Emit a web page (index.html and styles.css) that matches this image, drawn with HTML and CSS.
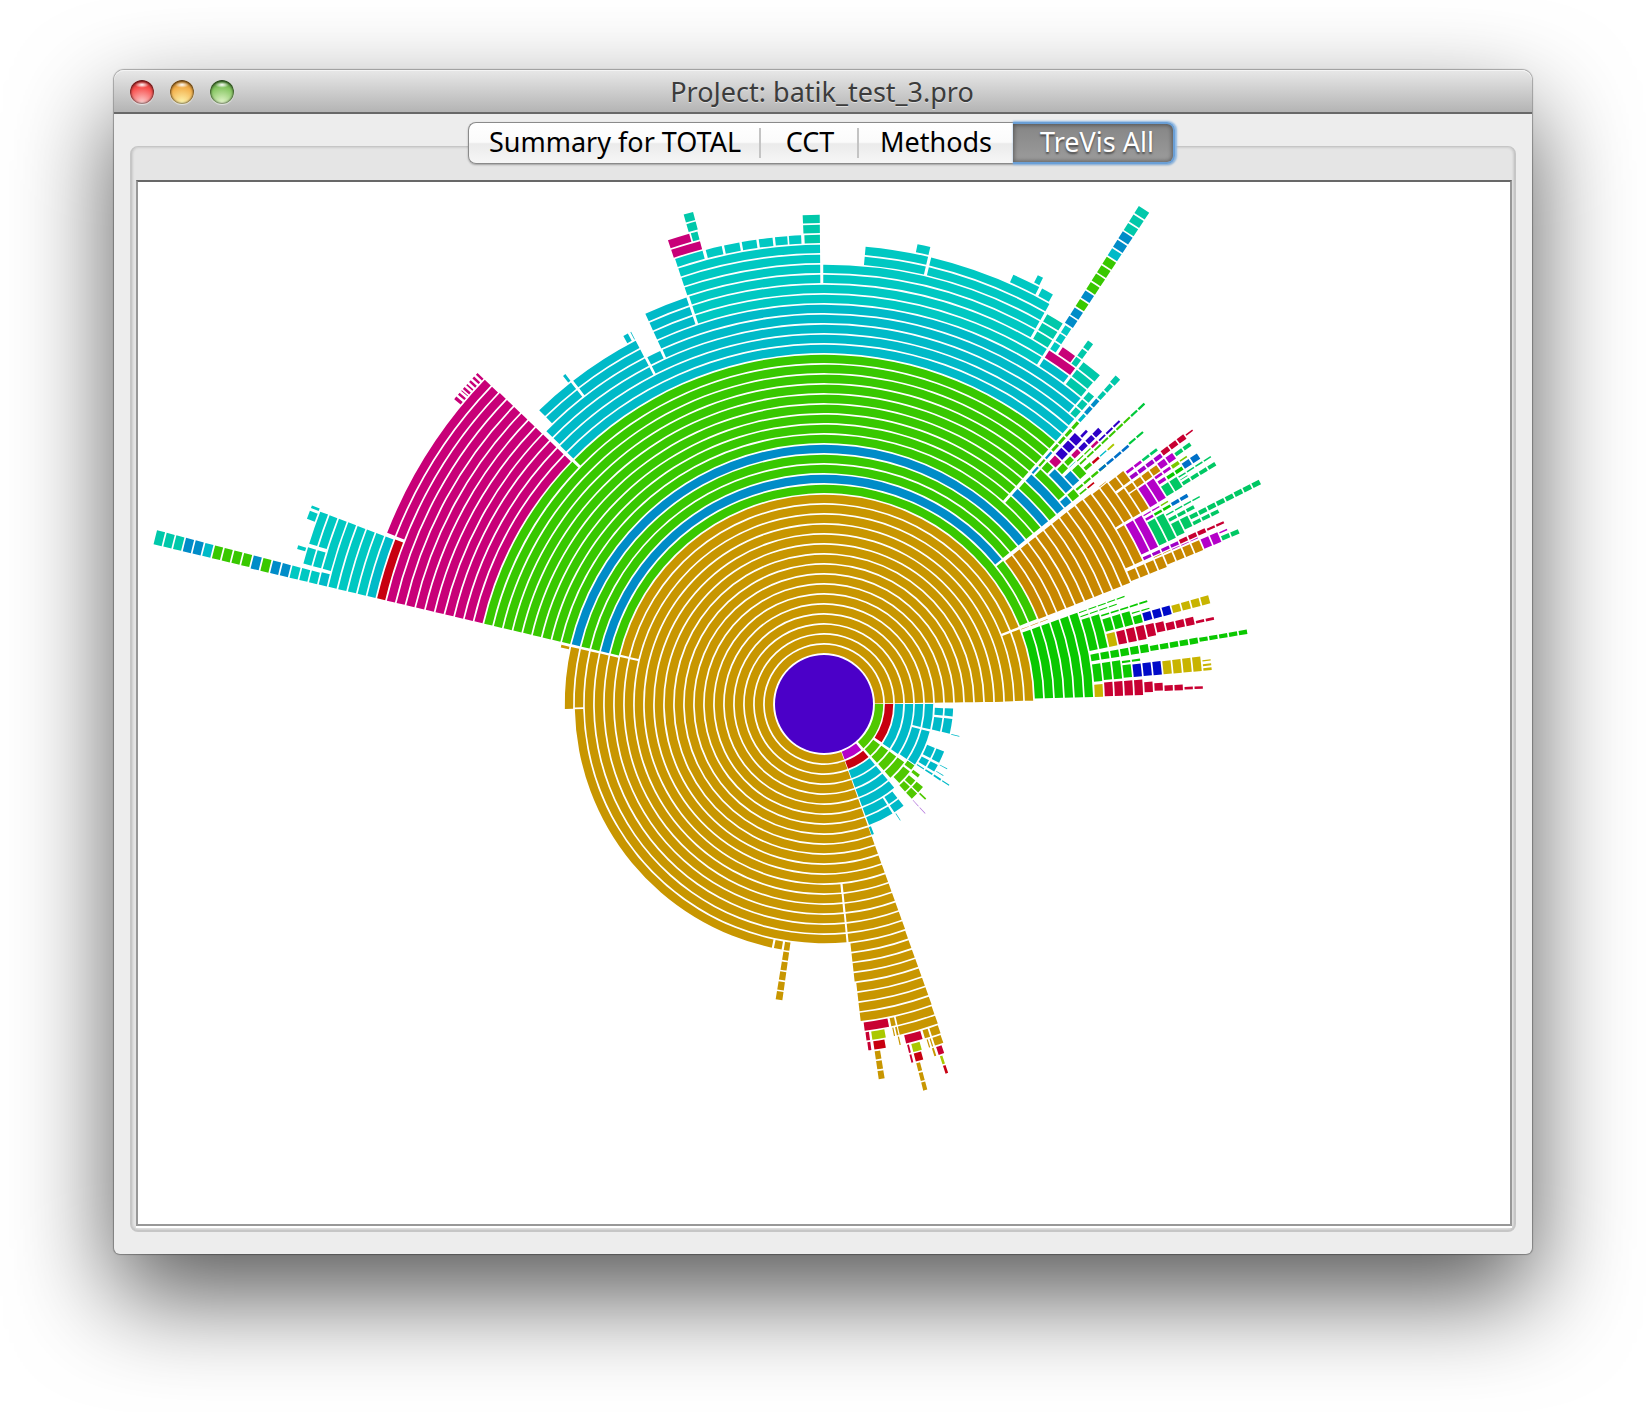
FILE: index.html
```html
<!DOCTYPE html>
<html lang="en">
<head>
  <meta charset="UTF-8">
  <title>ProJect: batik_test_3.pro</title>
  <link rel="stylesheet" href="styles.css">
</head>
<body>
  <div class="window">
    <header class="titlebar">
      <div class="lights">
        <button class="light red" aria-label="Close"></button>
        <button class="light yellow" aria-label="Minimize"></button>
        <button class="light green" aria-label="Zoom"></button>
      </div>
      <h1 class="title">ProJect: batik_test_3.pro</h1>
    </header>
    <main class="content">
      <div class="tabs" role="tablist">
        <button class="tab tab-summary" role="tab">Summary for TOTAL</button>
        <button class="tab tab-cct" role="tab">CCT</button>
        <button class="tab tab-methods" role="tab">Methods</button>
        <button class="tab tab-trevis selected" role="tab" aria-selected="true">TreVis All</button>
      </div>
      <section class="pane">
        <div class="canvas">
          <svg id="trevis" viewBox="-686 -522 1372 1042" role="img" aria-label="Calling context ring chart"></svg>
        </div>
      </section>
    </main>
  </div>
  <script src="trevis.js"></script>
</body>
</html>
```

FILE: styles.css
```css
* { box-sizing: border-box; }

body {
  margin: 0;
  min-height: 100vh;
  padding: 70px 114px 159px;
  display: flex;
  background: #fff;
  font-family: "Noto Sans", "Open Sans", sans-serif;
  font-size: 27px;
}

button { font: inherit; border: 0; padding: 0; margin: 0; }

.window {
  flex: 1;
  display: flex;
  flex-direction: column;
  background: #ededed;
  border-radius: 10px 10px 6px 6px;
  box-shadow: 0 0 1px 1px rgba(0, 0, 0, .3), 0 42px 100px rgba(0, 0, 0, .66);
}

/* title bar */
.titlebar {
  display: grid;
  grid-template-columns: 1fr auto 1fr;
  align-items: center;
  height: 44px;
  padding: 2px 18px 0 16px;
  border-bottom: 2px solid #686868;
  border-radius: 10px 10px 0 0;
  background: linear-gradient(#e8e8e8, #b4b4b4);
  box-shadow: inset 0 1px 0 #f4f4f4;
}
.title { grid-column: 2; margin: 0; font-size: 27px; line-height: 36px; font-weight: 400; color: #3c3c3c; text-shadow: 0 1px 0 rgba(255, 255, 255, .5); }
.lights { display: flex; gap: 16px; }
.light { width: 24px; height: 24px; border-radius: 50%; box-shadow: 0 1px 1px rgba(255, 255, 255, .6), inset 0 0 2px 1px rgba(0, 0, 0, .5), inset 0 2px 3px rgba(0, 0, 0, .3); }
.red { background: radial-gradient(ellipse 7px 3px at 50% 20%, #fff, transparent), radial-gradient(circle at 50% 95%, #fcd0d0, #f8514f 60%, #c02020); }
.yellow { background: radial-gradient(ellipse 7px 3px at 50% 20%, #fff, transparent), radial-gradient(circle at 50% 95%, #fdf6b0, #f3b04c 60%, #b87018); }
.green { background: radial-gradient(ellipse 7px 3px at 50% 20%, #fff, transparent), radial-gradient(circle at 50% 95%, #e4f6cc, #86c662 60%, #3c7c28); }

/* tabs */
.content {
  flex: 1;
  display: flex;
  flex-direction: column;
  padding: 8px 16px 22px;
}
.tabs { position: relative; display: flex; align-self: center; margin: 0 3px -18px 0; border-radius: 8px; box-shadow: 0 1px 2px rgba(0, 0, 0, .3); }
.tab {
  position: relative;
  height: 42px;
  line-height: 36px;
  padding-bottom: 2px;
  color: #000;
  background: linear-gradient(#fff 0, #fbfbfb 48%, #ebebeb 52%, #f6f6f6);
  border: 1px solid #8a8a8a;
  border-width: 1px 0;
}
.tab-summary { width: 293px; border-left-width: 1px; border-radius: 8px 0 0 8px; }
.tab-cct { width: 98px; }
.tab-methods { width: 154px; }
.tab-trevis { width: 162px; padding-left: 8px; }
.tab-summary::after, .tab-cct::after {
  content: "";
  position: absolute;
  right: 0;
  top: 5px;
  width: 2px;
  height: 30px;
  background: #c4c4c4;
}
.tab.selected {
  color: #fff;
  text-shadow: 0 2px 2px rgba(0, 0, 0, .5);
  background: linear-gradient(#858585, #9c9c9c);
  border: 2px solid #6a9fd6;
  border-left: 0;
  border-radius: 0 8px 8px 0;
  box-shadow: 1px 0 2px 1px #8db8e4, inset 0 0 4px 1px rgba(0, 0, 0, .4);
}

/* pane with the chart */
.pane {
  flex: 1;
  display: flex;
  padding: 33px 2px 4px 4px;
  border: 2px solid #c6c6c6;
  border-top-width: 1px;
  border-radius: 8px;
  background: #e5e5e5;
  box-shadow: inset 0 0 3px rgba(0, 0, 0, .2);
}
.canvas {
  flex: 1;
  background: #fff;
  border: 2px solid #989898;
  border-top-color: #686868;
  box-shadow: 0 2px 0 #fff;
}
.canvas svg { display: block; width: 100%; height: 100%; }
```

FILE: trevis.js
```js
var GOLD = '#c89600', ORANGE = '#c88800', GREEN = '#38c800', BLUE = '#008cc8';
var CYAN = '#00bac8', AQUA = '#00c8c2', TEAL = '#00c8aa', PINK = '#c80078';
var RED = '#c80010', CRIMSON = '#c80032', PURPLE = '#b400c8', VIOLET = '#a000c8';
var JADE = '#00c864', LEAF = '#0ac800', NAVY = '#000ac8', YELLOW = '#c8b400';
var LIME = '#aac800', INDIGO = '#2d00c8', AZURE = '#0070c8', MOSS = '#50c800';

// [colour, inner radius, outer radius, from angle, to angle]
// every 10 units of radius is one call depth, angles are counterclockwise
var calls = [
  // main branch
  [GOLD, 50, 180, .7, 289.8],
  [GOLD, 180, 190, .8, 275.2], [GOLD, 180, 190, 275.9, 289.8],
  [GOLD, 190, 210, .9, 20.9], [GOLD, 190, 210, 21.6, 166.4], [GOLD, 190, 210, 167, 275.3],
  [GOLD, 190, 240, 275.9, 289.8], [GOLD, 210, 240, 167.3, 275.4],
  [GOLD, 240, 250, 167.3, 180.8], [GOLD, 250, 260, 167.3, 181.1], [GOLD, 260, 270, 167.3, 167.9],
  [GOLD, 240, 250, 181.2, 257.9], [GOLD, 240, 250, 258.4, 260.2], [GOLD, 240, 300, 260.7, 262],
  [GOLD, 240, 280, 276.3, 289.7], [GOLD, 280, 320, 276.6, 289.7],

  // bottom tips
  [CRIMSON, 320, 330, 277.1, 281.4], [GOLD, 320, 330, 281.8, 282.6], [GOLD, 320, 340, 282.9, 289.6],
  [CRIMSON, 330, 340, 277.2, 277.8], [LIME, 330, 340, 278.2, 280.5], [GOLD, 330, 340, 281.9, 282.1], [GOLD, 330, 340, 282.4, 282.7],
  [CRIMSON, 340, 350, 277.3, 277.8], [RED, 340, 350, 278.3, 280.2], [GOLD, 340, 350, 282.5, 282.7],
  [GOLD, 350, 380, 278.3, 279.2],
  [CRIMSON, 340, 350, 283.6, 286.4], [GOLD, 340, 350, 286.8, 287.7], [GOLD, 340, 350, 288, 289.5],
  [CRIMSON, 350, 360, 283.7, 284], [LIME, 350, 360, 284.4, 285.8], [GOLD, 350, 360, 287, 287.2], [GOLD, 350, 360, 287.5, 287.7], [GOLD, 350, 360, 288, 289.4],
  [CRIMSON, 360, 370, 283.7, 284], [RED, 360, 370, 284.4, 285.6], [GOLD, 360, 370, 287.4, 287.7], [CRIMSON, 360, 370, 288.1, 289],
  [GOLD, 370, 400, 284.4, 285], [LIME, 370, 380, 288.2, 288.6], [RED, 380, 390, 288.2, 288.6],

  // big fan
  [GREEN, 210, 220, 21.8, 166.7],
  [GREEN, 220, 230, 21.8, 38.6], [BLUE, 220, 230, 39.2, 166.7],
  [GREEN, 230, 250, 39.2, 166.7], [BLUE, 250, 260, 39.2, 166.7],
  [GREEN, 260, 270, 39.2, 166.7], [GREEN, 270, 340, 48.6, 166.7],
  [GREEN, 340, 350, 48.6, 135.6], [GREEN, 340, 350, 136.1, 166.7],
  [PINK, 350, 450, 136.2, 166.7], [PINK, 450, 470, 136.3, 158.6],
  [PINK, 470, 480, 136.3, 136.6], [PINK, 470, 480, 136.9, 137.2], [PINK, 470, 480, 137.5, 137.8],
  [PINK, 470, 480, 138.1, 138.3], [PINK, 470, 480, 138.6, 138.9], [PINK, 470, 480, 139.1, 139.2],
  [PINK, 470, 480, 139.5, 139.8], [PINK, 470, 480, 140.1, 140.5],

  // left tail
  [RED, 450, 460, 159, 166.7], [CYAN, 460, 470, 159.1, 166.7], [AQUA, 470, 510, 159.1, 166.7],
  [AQUA, 510, 520, 159.1, 164.9], [CYAN, 510, 520, 165.3, 166.7],
  [AQUA, 520, 540, 159.1, 162.7], [AQUA, 520, 540, 163.1, 164.9],
  [AQUA, 540, 550, 158.8, 159.1], [AQUA, 540, 550, 159.4, 160.3], [AQUA, 540, 550, 163.2, 163.6],
  [AQUA, 520, 550, 165.4, 166.7], [BLUE, 550, 570, 165.4, 166.7], [GREEN, 570, 580, 165.4, 166.7],
  [BLUE, 580, 590, 165.4, 166.7], [GREEN, 590, 630, 165.4, 166.6], [CYAN, 630, 640, 165.4, 166.6],
  [BLUE, 640, 660, 165.4, 166.6], [TEAL, 660, 690, 165.4, 166.6],

  // top
  [CYAN, 350, 370, 48.6, 135.6],
  [CYAN, 370, 380, 48.7, 117], [CYAN, 370, 390, 117.4, 135.5],
  [TEAL, 380, 400, 48.7, 49.7], [CYAN, 380, 390, 50, 114.5], [CYAN, 380, 390, 114.9, 117],
  [CYAN, 390, 400, 50, 114.6],
  [CYAN, 390, 410, 117.4, 127.8], [CYAN, 390, 410, 128.2, 134.1],
  [CYAN, 410, 420, 128.1, 128.5], [CYAN, 410, 420, 117.4, 117.5], [CYAN, 410, 420, 117.9, 118.6],
  [CYAN, 400, 430, 108.7, 114.6],
  [TEAL, 400, 410, 48.7, 49.7], [TEAL, 400, 420, 50.1, 52.9], [TEAL, 420, 430, 50, 52.8],
  [CYAN, 400, 410, 53.3, 57.5], [AQUA, 400, 420, 57.9, 108.3],
  [PINK, 410, 420, 53.2, 57.5], [PINK, 420, 430, 54.2, 56.2],
  [AQUA, 420, 450, 56.6, 57.5], [TEAL, 420, 450, 53.2, 54],
  [BLUE, 450, 470, 56.5, 57.7], [GREEN, 470, 480, 56.5, 57.7], [BLUE, 480, 490, 56.5, 57.7],
  [GREEN, 490, 530, 56.5, 57.7], [CYAN, 530, 540, 56.5, 57.7], [BLUE, 540, 560, 56.5, 57.7], [TEAL, 560, 590, 56.5, 57.7],
  [TEAL, 420, 450, 57.9, 60.2], [AQUA, 420, 440, 60.6, 90.1], [AQUA, 420, 430, 90.5, 108.3],
  [AQUA, 440, 460, 60.6, 76.5], [AQUA, 440, 460, 76.9, 84.8],
  [AQUA, 460, 470, 60.8, 62.3], [AQUA, 460, 470, 62.7, 66.2], [AQUA, 470, 480, 62.8, 63.5], [AQUA, 460, 470, 76.9, 78.5],
  [AQUA, 430, 460, 90.5, 108.5],
  [AQUA, 460, 470, 92.8, 94.3], [AQUA, 460, 470, 94.5, 96], [AQUA, 460, 470, 96.3, 98], [AQUA, 460, 470, 98.3, 100.1],
  [AQUA, 460, 470, 100.4, 102.3], [AQUA, 460, 470, 102.6, 104.6], [AQUA, 460, 470, 105, 108.5],
  [TEAL, 460, 470, 90.5, 92.4], [TEAL, 470, 490, 90.5, 92.5],
  [PINK, 470, 480, 105, 108.6], [PINK, 480, 490, 106, 108.6], [TEAL, 480, 490, 105, 105.8], [TEAL, 490, 510, 104.9, 106],

  // blue and green twigs, north east
  [BLUE, 310, 320, 47.7, 48.1], [GREEN, 320, 330, 47.7, 48.1], [BLUE, 330, 340, 47.7, 48.1], [GREEN, 340, 380, 47.7, 48.2],
  [CYAN, 380, 390, 47.7, 48.2], [BLUE, 390, 410, 47.7, 48.3], [TEAL, 410, 430, 47.7, 48.3], [TEAL, 430, 440, 47.6, 48.4],
  [GREEN, 270, 280, 39.2, 48], [BLUE, 280, 290, 39.2, 48], [GREEN, 290, 300, 39.2, 47.9], [BLUE, 300, 310, 39.2, 47.9],
  [GREEN, 310, 320, 41, 47.3], [BLUE, 310, 320, 39.2, 40.6],
  [GREEN, 320, 330, 45.9, 47.3], [BLUE, 320, 330, 41.1, 45.5], [GREEN, 320, 330, 39.2, 40.7],
  [PINK, 330, 340, 45.6, 47.1], [GREEN, 330, 340, 44, 45.2], [BLUE, 330, 340, 41.2, 43.4], [GREEN, 330, 370, 40.1, 40.5], [GREEN, 330, 340, 39.2, 39.5],
  [INDIGO, 340, 370, 45.7, 47.2], [INDIGO, 370, 380, 45.9, 46.3],
  [GREEN, 340, 350, 44.3, 45.2], [PINK, 350, 360, 44.4, 45.2], [INDIGO, 360, 390, 44.4, 45.2],
  [CYAN, 340, 350, 43.9, 44], [GREEN, 350, 370, 43.7, 43.9], [PINK, 370, 380, 43.6, 44], [INDIGO, 380, 410, 43.6, 43.9],
  [GREEN, 340, 350, 41.3, 43.3], [GREEN, 350, 420, 43, 43.3], ['#00c83c', 420, 440, 43, 43.3],
  [GREEN, 350, 360, 41.7, 42.3], [RED, 360, 370, 41.7, 42.1], [CYAN, 370, 380, 41.8, 42], [LIME, 380, 390, 41.7, 42],
  [RED, 340, 350, 39.2, 39.5], [AZURE, 360, 400, 40.1, 40.5], ['#00c83c', 400, 420, 40.3, 40.6],

  // orange branch
  [ORANGE, 230, 330, 21.6, 38.3], [ORANGE, 330, 340, 24.2, 38.2],
  [ORANGE, 340, 350, 24.2, 30.8], [ORANGE, 340, 360, 31.2, 38],
  [ORANGE, 350, 360, 38.2, 38.3], [ORANGE, 360, 380, 36.1, 37.9],
  [ORANGE, 360, 370, 31.1, 35.7], [ORANGE, 370, 380, 31.1, 34.5], [ORANGE, 370, 410, 34.7, 35.7],
  [PURPLE, 380, 400, 31.1, 34.4], [PURPLE, 380, 400, 37.2, 37.6], [JADE, 400, 420, 37.2, 37.6],
  [VIOLET, 380, 420, 36.1, 36.7], [CRIMSON, 420, 450, 36.2, 36.9], [CRIMSON, 450, 460, 36.5, 36.7],
  [PURPLE, 410, 430, 34.9, 35.8], [JADE, 430, 450, 35.1, 35.6],
  [PURPLE, 400, 420, 34.1, 34.5], ['#78c800', 420, 430, 34, 34.5], ['#78c800', 430, 440, 34.2, 34.4],
  [PURPLE, 400, 410, 33.2, 33.7], [LEAF, 410, 430, 33.1, 33.6], [AZURE, 430, 450, 33.1, 33.9],
  [JADE, 400, 420, 31.2, 32.8], [JADE, 420, 460, 31.3, 31.8], [JADE, 420, 430, 32.1, 32.2], [JADE, 420, 460, 32.5, 32.7],
  [PURPLE, 350, 370, 25.2, 30.7],
  [PURPLE, 370, 390, 30.4, 30.6], ['#78c800', 390, 400, 30.4, 30.6],
  [PURPLE, 370, 380, 29.6, 30], [LEAF, 380, 400, 29.6, 30], [AZURE, 400, 420, 29.6, 30.1],
  [JADE, 370, 390, 25.3, 29.3], [JADE, 390, 430, 28.8, 29], [JADE, 390, 420, 27.8, 28.3],
  [JADE, 390, 400, 25.4, 27.4], [JADE, 400, 410, 25.8, 27.4],
  [JADE, 410, 490, 26.7, 27.3], [JADE, 410, 440, 25.8, 26.3],
  [VIOLET, 350, 390, 24.2, 24.7], [CRIMSON, 390, 420, 24.2, 24.8], [CRIMSON, 420, 440, 24.3, 24.6],
  [ORANGE, 360, 380, 23.9, 24], [PURPLE, 380, 410, 23.9, 24],
  [ORANGE, 330, 370, 21.8, 23.6], [ORANGE, 370, 410, 22.1, 23.6],
  [PURPLE, 410, 430, 22.2, 23.6], [JADE, 430, 450, 22.3, 22.9], [PURPLE, 430, 440, 23.3, 23.5],

  // green branch, east
  [ORANGE, 210, 240, 20.7, 20.8], [LEAF, 210, 270, 1.5, 19.8],
  [LEAF, 270, 320, 19.6, 19.8], [LEAF, 270, 310, 18.7, 18.9],
  [LEAF, 270, 290, 11.3, 18.1], [LEAF, 290, 340, 17.5, 17.8],
  [LEAF, 290, 320, 14.4, 16.9], [LEAF, 320, 330, 14.4, 15.8], [LEAF, 320, 340, 16.3, 16.5],
  [NAVY, 330, 360, 14.5, 15.9], [YELLOW, 360, 400, 14.6, 15.8],
  [YELLOW, 290, 300, 11.3, 13.9], [CRIMSON, 300, 330, 11.4, 13.9], [CRIMSON, 330, 340, 11.7, 13.8],
  [CRIMSON, 340, 350, 12.1, 13.7], [CRIMSON, 350, 380, 12.1, 13.3], [CRIMSON, 380, 400, 12.2, 12.6],
  [LEAF, 270, 330, 9.1, 10.5], [LEAF, 330, 380, 9.2, 10.1], [LEAF, 380, 430, 9.4, 10],
  [LEAF, 270, 280, 4.7, 8.4], [LEAF, 280, 300, 4.9, 8.4], [LEAF, 300, 310, 5, 7.4], [LEAF, 300, 320, 7.8, 8.2],
  [NAVY, 310, 340, 5, 7.3], [YELLOW, 340, 380, 5, 7.2],
  [YELLOW, 380, 390, 5, 5.4], [YELLOW, 380, 390, 5.7, 6], [YELLOW, 380, 390, 6.4, 6.6],
  [YELLOW, 270, 280, 1.5, 4.1], [CRIMSON, 280, 320, 1.6, 4.4], [CRIMSON, 320, 330, 2.1, 3.9], [CRIMSON, 330, 340, 2.3, 3.6],
  [CRIMSON, 340, 360, 2.2, 3.1], [CRIMSON, 360, 380, 2.3, 2.7],

  // small branches, south east
  [MOSS, 50, 60, -48.2, 0], [RED, 60, 70, -33.6, 0], [CYAN, 70, 90, -34, 0],
  [CYAN, 90, 110, -13.4, 0], [CYAN, 90, 110, -33.6, -14.6],
  [CYAN, 110, 130, -5.5, -2], [CYAN, 110, 130, -13.3, -6.7], [CYAN, 130, 140, -13.6, -13.3],
  [CYAN, 110, 130, -27, -21.6], [CYAN, 110, 130, -31.5, -28.2], [CYAN, 130, 140, -27.9, -27.6], [CYAN, 130, 140, -31.1, -30.8],
  [CYAN, 100, 110, -34.8, -34.2], [CYAN, 110, 120, -33.3, -32.8], [CYAN, 120, 140, -33.4, -32.6], [CYAN, 140, 150, -33.2, -32.8],
  [MOSS, 60, 100, -48, -36], [MOSS, 100, 110, -46.4, -38.2], [MOSS, 100, 110, -37, -34.2],
  [MOSS, 110, 130, -47.2, -43.9], [MOSS, 110, 130, -43.2, -40], [MOSS, 110, 120, -38, -36.4], [MOSS, 130, 140, -43.4, -42.7],
  ['#b478dc', 130, 150, -47.4, -47.1],
  [PURPLE, 50, 60, -69.6, -51], [RED, 60, 70, -69.6, -50], [CYAN, 70, 110, -69.6, -50],
  [CYAN, 110, 130, -69.6, -58], [CYAN, 110, 130, -57, -52], [CYAN, 130, 140, -56.9, -56.6], [CYAN, 130, 140, -70, -69]
];

function point(r, deg) {
  var a = deg * Math.PI / 180;
  return (r * Math.cos(a)).toFixed(2) + ' ' + (-r * Math.sin(a)).toFixed(2);
}

function segment(r, from, to) {
  var inner = r + 0.9, outer = r + 9.2;
  var large = to - from > 180 ? 1 : 0;
  return 'M' + point(inner, from) + 'L' + point(outer, from) +
    'A' + outer + ' ' + outer + ' 0 ' + large + ' 0 ' + point(outer, to) +
    'L' + point(inner, to) +
    'A' + inner + ' ' + inner + ' 0 ' + large + ' 1 ' + point(inner, from) + 'Z';
}

var markup = '<circle r="49" fill="#4b00c8"/>';
calls.forEach(function (c) {
  var d = '';
  for (var r = c[1]; r < c[2]; r += 10) {
    d += segment(r, c[3], c[4]);
  }
  markup += '<path fill="' + c[0] + '" d="' + d + '"/>';
});
document.getElementById('trevis').innerHTML = markup;
```
